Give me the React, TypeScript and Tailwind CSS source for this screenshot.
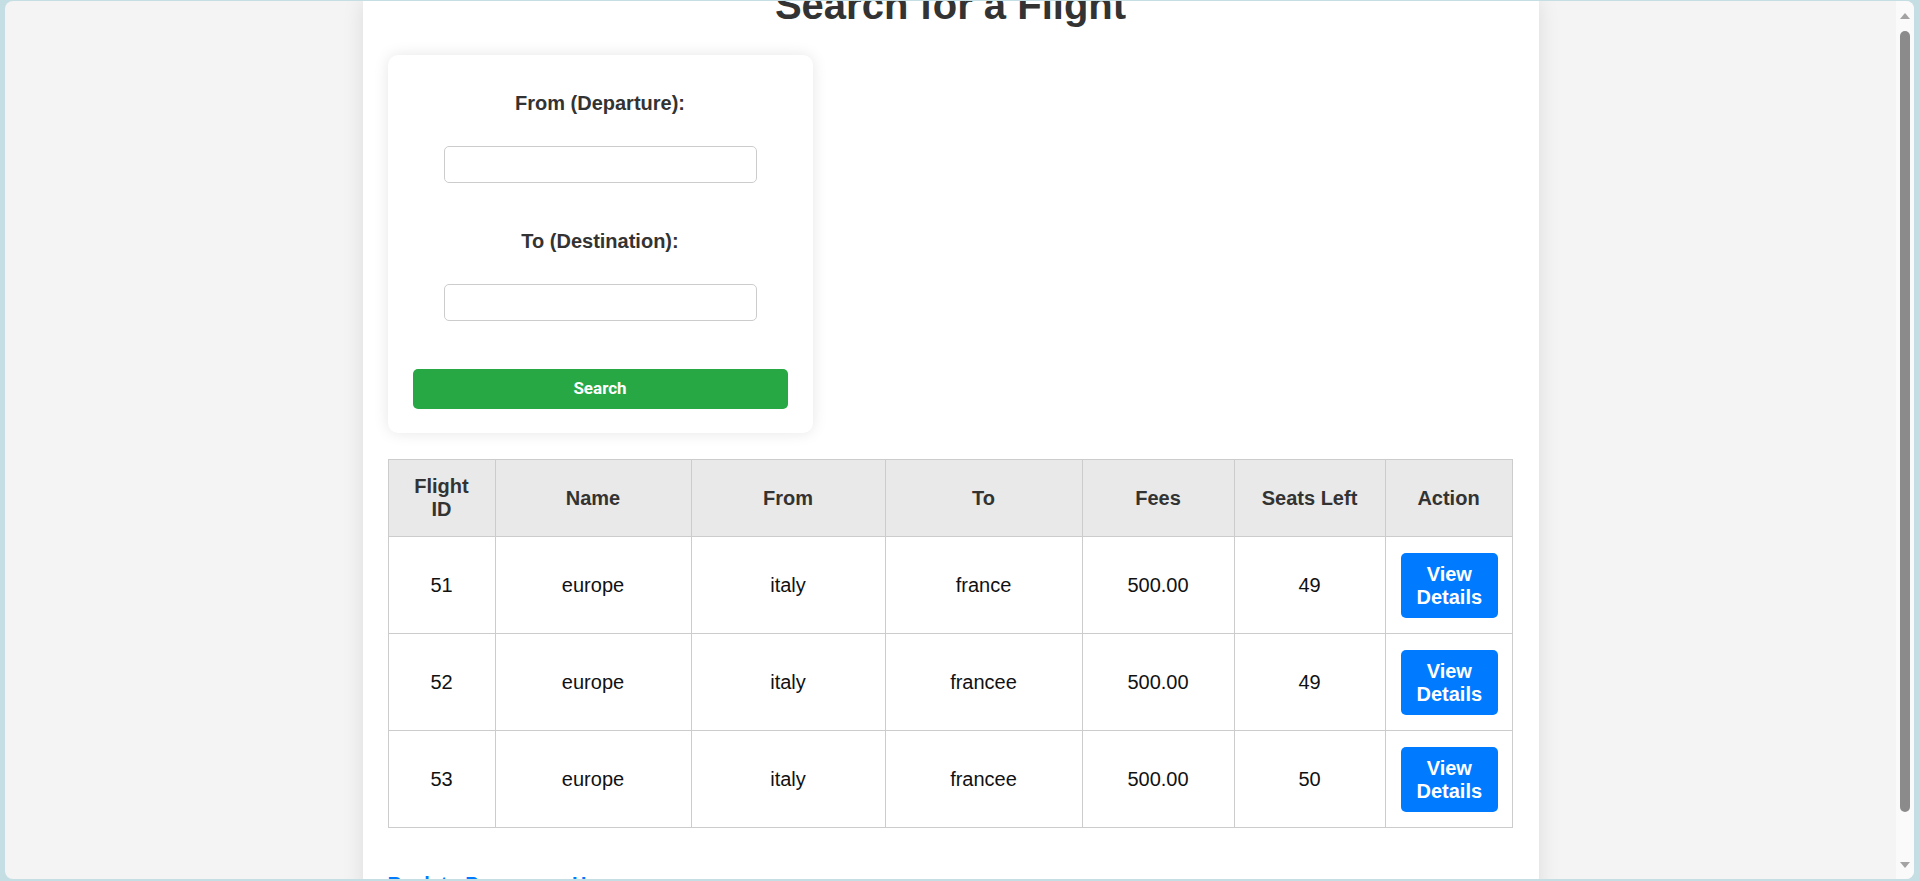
import React from 'react';

interface Flight {
  id: number;
  name: string;
  from: string;
  to: string;
  fees: string;
  seats: number;
}

const flights: Flight[] = [
  { id: 51, name: 'europe', from: 'italy', to: 'france', fees: '500.00', seats: 49 },
  { id: 52, name: 'europe', from: 'italy', to: 'francee', fees: '500.00', seats: 49 },
  { id: 53, name: 'europe', from: 'italy', to: 'francee', fees: '500.00', seats: 50 },
];

const headers = [
  { label: 'Flight ID', width: 'w-[107px]' },
  { label: 'Name', width: 'w-[196px]' },
  { label: 'From', width: 'w-[194px]' },
  { label: 'To', width: 'w-[197px]' },
  { label: 'Fees', width: 'w-[152px]' },
  { label: 'Seats Left', width: 'w-[151px]' },
  { label: 'Action', width: 'w-[127px]' },
];

const Scrollbar: React.FC = () => (
  <div className="flex w-[18px] flex-col items-center bg-[#fafafa]">
    <svg width="10" height="6" viewBox="0 0 10 6" className="mt-[12px]">
      <path d="M5 0 L10 6 L0 6 Z" fill="#a3a3a3" />
    </svg>
    <div className="mt-[12px] h-[781px] w-[10px] rounded-full bg-[#8b8b8b]" />
    <svg width="10" height="6" viewBox="0 0 10 6" className="mt-[50px]">
      <path d="M0 0 L10 0 L5 6 Z" fill="#a3a3a3" />
    </svg>
  </div>
);

const SearchCard: React.FC = () => (
  <div className="flex w-[425px] flex-col items-center self-start rounded-[10px] bg-white px-[25px] pt-[25px] pb-[24px] shadow-[0_0_15px_rgba(0,0,0,0.1)]">
    <label className="mt-[12px] text-[20px] font-bold leading-[23px] text-[#333]">From (Departure):</label>
    <input
      type="text"
      className="mt-[31px] h-[37px] w-[313px] rounded-[5px] border border-[#ccc] bg-white px-2 outline-none"
    />
    <label className="mt-[47px] text-[20px] font-bold leading-[23px] text-[#333]">To (Destination):</label>
    <input
      type="text"
      className="mt-[31px] h-[37px] w-[313px] rounded-[5px] border border-[#ccc] bg-white px-2 outline-none"
    />
    <button className="mt-[48px] h-[40px] w-full rounded-[5px] bg-[#28a745] font-['Roboto',sans-serif] text-[17px] font-bold text-white">
      Search
    </button>
  </div>
);

const FlightTable: React.FC = () => (
  <table className="mt-[26px] w-[1125px] table-fixed border-collapse self-start">
    <thead>
      <tr className="bg-[#e9e9e9]">
        {headers.map((h) => (
          <th
            key={h.label}
            className={`${h.width} border border-[#ccc] px-[15px] py-[15px] text-center text-[20px] font-bold leading-[23px] text-[#333]`}
          >
            {h.label}
          </th>
        ))}
      </tr>
    </thead>
    <tbody>
      {flights.map((f) => (
        <tr key={f.id}>
          {[f.id, f.name, f.from, f.to, f.fees, f.seats].map((v, i) => (
            <td
              key={i}
              className="border border-[#ccc] px-[15px] pt-[16px] pb-[15px] text-center text-[20px] leading-[23px] text-[#111]"
            >
              {v}
            </td>
          ))}
          <td className="border border-[#ccc] px-[15px] pt-[16px] pb-[15px] text-center">
            <button className="h-[65px] rounded-[5px] bg-[#007bff] px-[16px] align-middle text-[20px] font-bold leading-[23px] text-white">
              View Details
            </button>
          </td>
        </tr>
      ))}
    </tbody>
  </table>
);

export default function App() {
  return (
    <div className="h-[881px] w-[1920px] bg-[#c5dee3] pt-[1px] pr-[6px] pb-[2px] pl-[5px] font-['Liberation_Sans',Arial,sans-serif]">
      <div className="flex h-full overflow-hidden rounded-[8px] bg-[#f4f4f4]">
        <div className="flex-1 overflow-hidden">
          <div className="mx-auto flex min-h-full w-[1176px] flex-col bg-white px-[25px] shadow-[0_0_20px_rgba(0,0,0,0.1)]">
            <h1 className="-mt-[19px] mb-[27px] text-center text-[40px] font-bold leading-[46px] text-[#333]">
              Search for a Flight
            </h1>
            <SearchCard />
            <FlightTable />
            <a href="#" className="mt-[45px] self-start text-[20px] font-bold leading-[23px] text-[#007bff]">
              Back to Passenger Home
            </a>
          </div>
        </div>
        <Scrollbar />
      </div>
    </div>
  );
}
